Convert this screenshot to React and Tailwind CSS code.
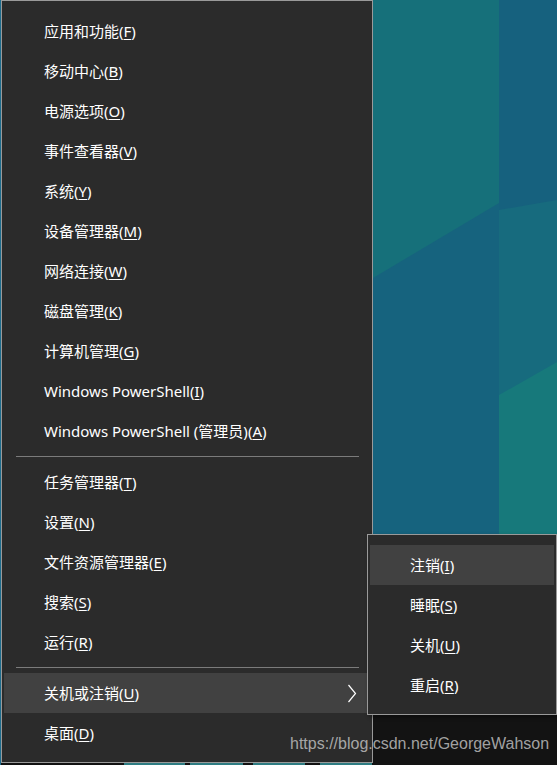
import React from "react";

const font = { fontFamily: '"Noto Sans", "Noto Sans CJK SC", sans-serif' };

function Label({ text, k }) {
  return (
    <span>
      {text}(<span className="underline underline-offset-2">{k}</span>)
    </span>
  );
}

const group1 = [
  ["应用和功能", "F"],
  ["移动中心", "B"],
  ["电源选项", "O"],
  ["事件查看器", "V"],
  ["系统", "Y"],
  ["设备管理器", "M"],
  ["网络连接", "W"],
  ["磁盘管理", "K"],
  ["计算机管理", "G"],
  ["Windows PowerShell", "I"],
  ["Windows PowerShell (管理员)", "A"],
];
const group2 = [
  ["任务管理器", "T"],
  ["设置", "N"],
  ["文件资源管理器", "E"],
  ["搜索", "S"],
  ["运行", "R"],
];
const sub = [
  ["注销", "I"],
  ["睡眠", "S"],
  ["关机", "U"],
  ["重启", "R"],
];

function Row({ t, k, active, chevron }) {
  return (
    <div
      className={`h-[40px] flex items-center pl-[40px] pr-[13px] text-[15px] leading-[20px] text-white ${
        active ? "bg-[#414141]" : ""
      }`}
    >
      <Label text={t} k={k} />
      {chevron && (
        <svg className="ml-auto" width="10" height="19" viewBox="0 0 10 19">
          <path d="M1.5 1 L8.5 9.5 L1.5 18" fill="none" stroke="#ffffff" strokeWidth="1.2" />
        </svg>
      )}
    </div>
  );
}

function Sep() {
  return (
    <div className="h-[11px] flex items-center pl-[12px] pr-[11px]">
      <div className="h-px w-full bg-[#7b7b7b]" />
    </div>
  );
}

export default function App() {
  return (
    <div className="relative w-[557px] h-[765px] overflow-hidden bg-[#17707b]" style={font}>
      <svg className="absolute inset-0" width="557" height="765" viewBox="0 0 557 765">
        <rect x="0" y="0" width="557" height="765" fill="#16707a" />
        <rect x="499" y="0" width="58" height="210" fill="#16617e" />
        <polygon points="499,210 557,200 557,395 499,395" fill="#176b7e" />
        <polygon points="373,278 499,203 499,715 373,715" fill="#16637e" />
        <polygon points="499,395 557,362 557,715 499,715" fill="#17797b" />
        <rect x="373" y="715" width="184" height="50" fill="#131313" />
        <rect x="0" y="760" width="373" height="5" fill="#121212" />
        <rect x="124" y="763" width="61" height="2" fill="#2e7c82" />
        <rect x="190" y="763" width="53" height="2" fill="#2e7c82" />
        <rect x="253" y="763" width="52" height="2" fill="#2e7c82" />
        <rect x="320" y="763" width="52" height="2" fill="#2e7c82" />
        <rect x="0" y="0" width="1" height="765" fill="#1d6b8c" />
      </svg>

      {/* main menu */}
      <div className="absolute left-[1px] top-0 w-[372px] h-[763px] bg-[#2b2b2b] border border-[#9a9a9a] px-[2px] pt-[10px] flex flex-col">
        {group1.map(([t, k]) => (
          <Row key={t} t={t} k={k} />
        ))}
        <Sep />
        {group2.map(([t, k]) => (
          <Row key={t} t={t} k={k} />
        ))}
        <Sep />
        <Row t="关机或注销" k="U" active chevron />
        <Row t="桌面" k="D" />
      </div>

      {/* submenu */}
      <div className="absolute left-[367px] top-[534px] w-[190px] h-[181px] bg-[#2b2b2b] border border-[#9a9a9a] px-[2px] pt-[10px] flex flex-col shadow-[2px_2px_4px_rgba(0,0,0,0.4)]">
        {sub.map(([t, k], i) => (
          <Row key={t} t={t} k={k} active={i === 0} />
        ))}
      </div>

      {/* watermark */}
      <div
        className="absolute left-[290px] top-[734px] text-[16px] leading-[20px] text-[#c8c8c8]/80"
        style={{ fontFamily: '"Liberation Sans", Arial, sans-serif' }}
      >
        https://blog.csdn.net/GeorgeWahson
      </div>
    </div>
  );
}
